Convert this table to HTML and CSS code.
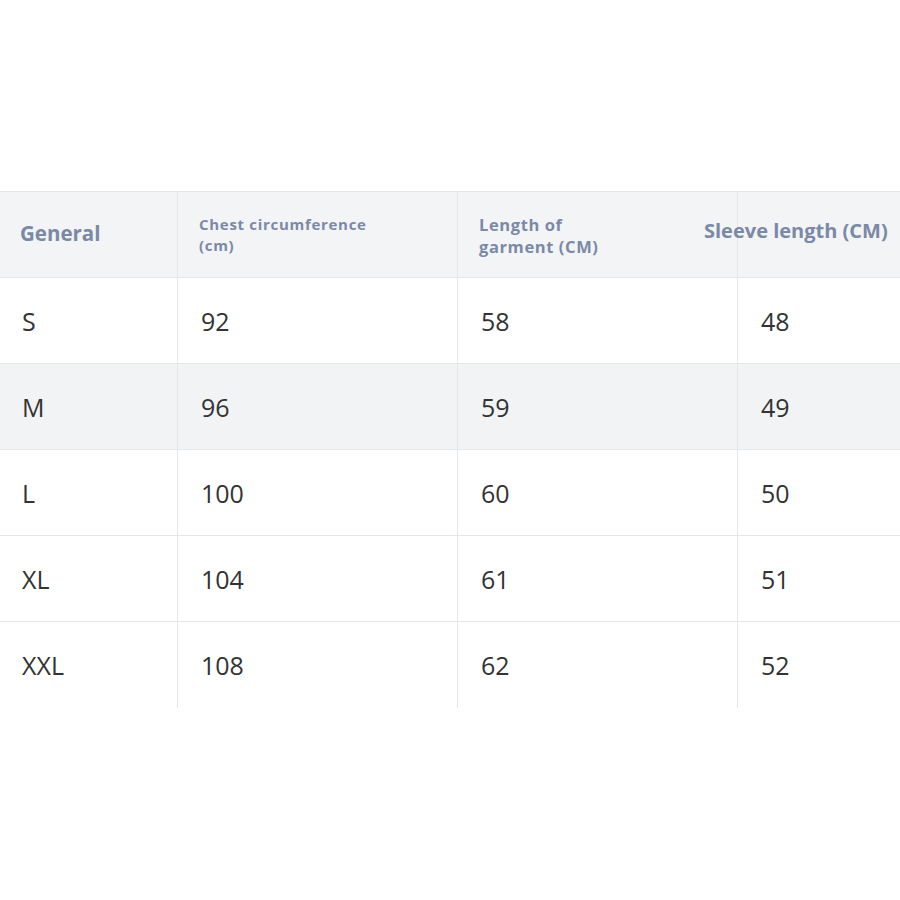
FILE: index.html
```html
<!DOCTYPE html>
<html>
<head>
<meta charset="utf-8">
<link rel="stylesheet" href="styles.css">
</head>
<body>
<div class="page">
  <div class="table">
    <div class="row head">
      <div class="cell"><span class="h-general">General</span></div>
      <div class="cell"><span class="h-chest">Chest circumference<br>(cm)</span></div>
      <div class="cell"><span class="h-length">Length of<br>garment (CM)</span></div>
      <div class="cell"><span class="h-sleeve">Sleeve length (CM)</span></div>
    </div>
    <div class="row">
      <div class="cell">S</div><div class="cell">92</div><div class="cell">58</div><div class="cell">48</div>
    </div>
    <div class="row shade">
      <div class="cell">M</div><div class="cell">96</div><div class="cell">59</div><div class="cell">49</div>
    </div>
    <div class="row">
      <div class="cell">L</div><div class="cell">100</div><div class="cell">60</div><div class="cell">50</div>
    </div>
    <div class="row">
      <div class="cell">XL</div><div class="cell">104</div><div class="cell">61</div><div class="cell">51</div>
    </div>
    <div class="row last">
      <div class="cell">XXL</div><div class="cell">108</div><div class="cell">62</div><div class="cell">52</div>
    </div>
  </div>
</div>
</body>
</html>
```

FILE: styles.css
```css
html, body {
  margin: 0;
  padding: 0;
  background: #ffffff;
}
body {
  width: 900px;
  height: 900px;
  overflow: hidden;
  font-family: "Open Sans", "Noto Sans", sans-serif;
}
.page {
  padding-top: 191px;
}
.table {
  border-top: 1px solid #e4e7eb;
}
.row {
  display: grid;
  grid-template-columns: 177px 280px 280px 1fr;
  height: 86px;
  border-bottom: 1px solid #e4e7eb;
  box-sizing: border-box;
  color: #333333;
  font-size: 25px;
}
.row.last {
  border-bottom: none;
}
.row.head {
  height: 86px;
  background: #f2f4f6;
}
.row.shade {
  background: #f2f3f5;
}
.cell {
  display: flex;
  align-items: center;
  padding-left: 23px;
  border-left: 1px solid #e4e7eb;
  white-space: nowrap;
}
.cell:first-child {
  border-left: none;
  padding-left: 22px;
}
.head .cell {
  color: #7b89a6;
  font-weight: 700;
  padding-left: 21px;
}
.head .cell:first-child {
  padding-left: 20px;
}
.h-general {
  font-size: 20.5px;
  margin-top: -4px;
}
.h-chest {
  font-size: 15px;
  line-height: 21px;
  letter-spacing: 0.7px;
  margin-top: 0;
}
.h-length {
  font-size: 16.5px;
  line-height: 22px;
  letter-spacing: 0.6px;
  margin-top: 2px;
}
.h-sleeve {
  font-size: 20px;
  margin-left: -55px;
  margin-top: -8px;
  letter-spacing: 0;
}
```
